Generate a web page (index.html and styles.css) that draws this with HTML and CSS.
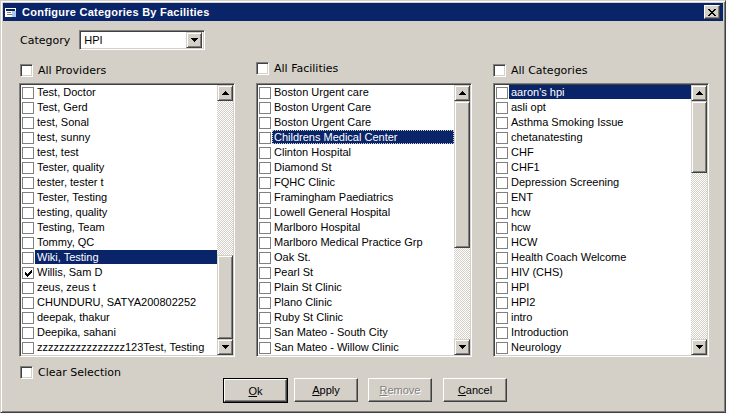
FILE: index.html
```html
<!DOCTYPE html>
<html>
<head>
<meta charset="utf-8">
<title>Configure Categories By Facilities</title>
<link rel="stylesheet" href="styles.css">
</head>
<body>
<div class="window">
  <div class="titlebar">
    <svg class="ticon" width="12" height="11" viewBox="0 0 12 11">
      <rect x="0" y="1" width="11" height="9" fill="#fff"/>
      <rect x="1" y="2" width="9" height="2" fill="#0a246a"/>
      <rect x="2" y="5" width="4" height="1" fill="#808080"/>
      <rect x="2" y="7" width="6" height="1" fill="#808080"/>
      <rect x="7" y="4" width="4" height="6" fill="#a6caf0"/>
    </svg>
    <span class="title">Configure Categories By Facilities</span>
    <div class="close">
      <svg width="8" height="7" viewBox="0 0 8 7"><path d="M0 0h2v1H0zM6 0h2v1H6zM1 1h2v1H1zM5 1h2v1H5zM2 2h4v1H2zM3 3h2v1H3zM2 4h4v1H2zM1 5h2v1H1zM5 5h2v1H5zM0 6h2v1H0zM6 6h2v1H6z" fill="#000"/></svg>
    </div>
  </div>
  <div class="content">
    <div class="catrow">
      <span class="label">Category</span>
      <div class="combo">
        <span class="combo-text">HPI</span>
        <div class="arrowbtn"><svg width="7" height="4" viewBox="0 0 7 4"><path d="M0 0h7v1H0zM1 1h5v1H1zM2 2h3v1H2zM3 3h1v1H3z" fill="#000"/></svg></div>
      </div>
    </div>

    <div class="cols">
      <div class="col">
        <div class="hdr hdr-left"><span class="cb3d"></span><span class="label">All Providers</span></div>
        <div class="list">
          <div class="items">
            <div class="item"><span class="ib"></span><span class="txt">Test, Doctor</span></div>
            <div class="item"><span class="ib"></span><span class="txt">Test, Gerd</span></div>
            <div class="item"><span class="ib"></span><span class="txt">test, Sonal</span></div>
            <div class="item"><span class="ib"></span><span class="txt">test, sunny</span></div>
            <div class="item"><span class="ib"></span><span class="txt">test, test</span></div>
            <div class="item"><span class="ib"></span><span class="txt">Tester, quality</span></div>
            <div class="item"><span class="ib"></span><span class="txt">tester, tester t</span></div>
            <div class="item"><span class="ib"></span><span class="txt">Tester, Testing</span></div>
            <div class="item"><span class="ib"></span><span class="txt">testing, quality</span></div>
            <div class="item"><span class="ib"></span><span class="txt">Testing, Team</span></div>
            <div class="item"><span class="ib"></span><span class="txt">Tommy, QC</span></div>
            <div class="item"><span class="ib"></span><span class="txt sel">Wiki, Testing</span></div>
            <div class="item"><span class="ib"><svg width="7" height="7" viewBox="0 0 7 7"><path d="M6 0h1v1H6zM5 1h2v1H5zM0 2h1v1H0zM4 2h3v1H4zM0 3h2v1H0zM3 3h3v1H3zM0 4h5v1H0zM1 5h3v1H1zM2 6h1v1H2z" fill="#000"/></svg></span><span class="txt">Willis, Sam D</span></div>
            <div class="item"><span class="ib"></span><span class="txt">zeus, zeus t</span></div>
            <div class="item"><span class="ib"></span><span class="txt">CHUNDURU, SATYA200802252</span></div>
            <div class="item"><span class="ib"></span><span class="txt">deepak, thakur</span></div>
            <div class="item"><span class="ib"></span><span class="txt">Deepika, sahani</span></div>
            <div class="item"><span class="ib"></span><span class="txt">zzzzzzzzzzzzzzzz123Test, Testing</span></div>
          </div>
          <div class="sb">
            <div class="arrowbtn sq"><svg width="7" height="4" viewBox="0 0 7 4"><path d="M3 0h1v1H3zM2 1h3v1H2zM1 2h5v1H1zM0 3h7v1H0z" fill="#000"/></svg></div>
            <div class="track track-end"><div class="thumb" style="height:84px"></div></div>
            <div class="arrowbtn sq"><svg width="7" height="4" viewBox="0 0 7 4"><path d="M0 0h7v1H0zM1 1h5v1H1zM2 2h3v1H2zM3 3h1v1H3z" fill="#000"/></svg></div>
          </div>
        </div>
      </div>

      <div class="col">
        <div class="hdr hdr-mid"><span class="cb3d"></span><span class="label">All Facilities</span></div>
        <div class="list">
          <div class="items">
            <div class="item"><span class="ib"></span><span class="txt">Boston Urgent care</span></div>
            <div class="item"><span class="ib"></span><span class="txt">Boston Urgent Care</span></div>
            <div class="item"><span class="ib"></span><span class="txt">Boston Urgent Care</span></div>
            <div class="item"><span class="ib"></span><span class="txt sel focus">Childrens Medical Center</span></div>
            <div class="item"><span class="ib"></span><span class="txt">Clinton Hospital</span></div>
            <div class="item"><span class="ib"></span><span class="txt">Diamond St</span></div>
            <div class="item"><span class="ib"></span><span class="txt">FQHC Clinic</span></div>
            <div class="item"><span class="ib"></span><span class="txt">Framingham Paediatrics</span></div>
            <div class="item"><span class="ib"></span><span class="txt">Lowell General Hospital</span></div>
            <div class="item"><span class="ib"></span><span class="txt">Marlboro Hospital</span></div>
            <div class="item"><span class="ib"></span><span class="txt">Marlboro Medical Practice Grp</span></div>
            <div class="item"><span class="ib"></span><span class="txt">Oak St.</span></div>
            <div class="item"><span class="ib"></span><span class="txt">Pearl St</span></div>
            <div class="item"><span class="ib"></span><span class="txt">Plain St Clinic</span></div>
            <div class="item"><span class="ib"></span><span class="txt">Plano Clinic</span></div>
            <div class="item"><span class="ib"></span><span class="txt">Ruby St Clinic</span></div>
            <div class="item"><span class="ib"></span><span class="txt">San Mateo - South City</span></div>
            <div class="item"><span class="ib"></span><span class="txt">San Mateo - Willow Clinic</span></div>
          </div>
          <div class="sb">
            <div class="arrowbtn sq"><svg width="7" height="4" viewBox="0 0 7 4"><path d="M3 0h1v1H3zM2 1h3v1H2zM1 2h5v1H1zM0 3h7v1H0z" fill="#000"/></svg></div>
            <div class="track"><div class="thumb" style="height:147px"></div></div>
            <div class="arrowbtn sq"><svg width="7" height="4" viewBox="0 0 7 4"><path d="M0 0h7v1H0zM1 1h5v1H1zM2 2h3v1H2zM3 3h1v1H3z" fill="#000"/></svg></div>
          </div>
        </div>
      </div>

      <div class="col">
        <div class="hdr hdr-right"><span class="cb3d"></span><span class="label">All Categories</span></div>
        <div class="list">
          <div class="items">
            <div class="item"><span class="ib"></span><span class="txt sel">aaron's hpi</span></div>
            <div class="item"><span class="ib"></span><span class="txt">asli opt</span></div>
            <div class="item"><span class="ib"></span><span class="txt">Asthma Smoking Issue</span></div>
            <div class="item"><span class="ib"></span><span class="txt">chetanatesting</span></div>
            <div class="item"><span class="ib"></span><span class="txt">CHF</span></div>
            <div class="item"><span class="ib"></span><span class="txt">CHF1</span></div>
            <div class="item"><span class="ib"></span><span class="txt">Depression Screening</span></div>
            <div class="item"><span class="ib"></span><span class="txt">ENT</span></div>
            <div class="item"><span class="ib"></span><span class="txt">hcw</span></div>
            <div class="item"><span class="ib"></span><span class="txt">hcw</span></div>
            <div class="item"><span class="ib"></span><span class="txt">HCW</span></div>
            <div class="item"><span class="ib"></span><span class="txt">Health Coach Welcome</span></div>
            <div class="item"><span class="ib"></span><span class="txt">HIV (CHS)</span></div>
            <div class="item"><span class="ib"></span><span class="txt">HPI</span></div>
            <div class="item"><span class="ib"></span><span class="txt">HPI2</span></div>
            <div class="item"><span class="ib"></span><span class="txt">intro</span></div>
            <div class="item"><span class="ib"></span><span class="txt">Introduction</span></div>
            <div class="item"><span class="ib"></span><span class="txt">Neurology</span></div>
          </div>
          <div class="sb">
            <div class="arrowbtn sq"><svg width="7" height="4" viewBox="0 0 7 4"><path d="M3 0h1v1H3zM2 1h3v1H2zM1 2h5v1H1zM0 3h7v1H0z" fill="#000"/></svg></div>
            <div class="track"><div class="thumb" style="height:72px"></div></div>
            <div class="arrowbtn sq"><svg width="7" height="4" viewBox="0 0 7 4"><path d="M0 0h7v1H0zM1 1h5v1H1zM2 2h3v1H2zM3 3h1v1H3z" fill="#000"/></svg></div>
          </div>
        </div>
      </div>
    </div>

    <div class="bottom">
      <div class="clear"><span class="cb3d"></span><span class="label">Clear Selection</span></div>
      <div class="buttons">
        <div class="btn btn-default"><span class="btn-in"><u>O</u>k</span></div>
        <div class="btn btn-apply"><u>A</u>pply</div>
        <div class="btn btn-remove disabled"><u>R</u>emove</div>
        <div class="btn btn-cancel"><u>C</u>ancel</div>
      </div>
    </div>
  </div>
</div>
</body>
</html>
```

FILE: styles.css
```css
* { box-sizing: border-box; }

body {
  margin: 0;
  background: #fbfbfb;
  font-family: "Liberation Sans", Arial, sans-serif;
  font-size: 11px;
  color: #000;
}

.window {
  width: 726px;
  height: 413px;
  background: #d4d0c8;
  border: 1px solid;
  border-color: #d4d0c8 #404040 #404040 #d4d0c8;
  box-shadow: inset 1px 1px #fff, inset -1px -1px #808080;
  padding: 2px;
  display: flex;
  flex-direction: column;
}

.titlebar {
  height: 18px;
  background: #0a246a;
  display: flex;
  align-items: center;
  padding-left: 2px;
  color: #fff;
}
.ticon { margin-right: 5px; flex: none; }
.title {
  font-family: "Liberation Sans", Arial, sans-serif;
  font-weight: bold;
  font-size: 11px;
  letter-spacing: 0.25px;
  white-space: nowrap;
}
.close {
  margin-left: auto;
  margin-right: 3px;
  width: 16px;
  height: 14px;
  background: #d4d0c8;
  border: 1px solid;
  border-color: #fff #404040 #404040 #fff;
  box-shadow: inset -1px -1px #808080;
  display: flex;
  align-items: center;
  justify-content: center;
  padding-right: 1px;
}

.content {
  padding-left: 16px;
  display: flex;
  flex-direction: column;
}

.label {
  font-family: "DejaVu Sans", Verdana, sans-serif;
  font-size: 11px;
  white-space: nowrap;
}

.catrow {
  margin-top: 9px;
  height: 20px;
  display: flex;
  align-items: center;
}
.catrow .label { margin-left: 1px; }

.combo {
  margin-left: 9px;
  width: 126px;
  height: 20px;
  background: #fff;
  border: 1px solid;
  border-color: #808080 #fff #fff #808080;
  box-shadow: inset 1px 1px #404040, inset -1px -1px #d4d0c8;
  padding: 2px;
  display: flex;
  align-items: center;
}
.combo-text { flex: 1; padding-left: 2px; }

.arrowbtn {
  width: 16px;
  height: 16px;
  background: #d4d0c8;
  border: 1px solid;
  border-color: #d4d0c8 #404040 #404040 #d4d0c8;
  box-shadow: inset 1px 1px #fff, inset -1px -1px #808080;
  display: flex;
  align-items: center;
  justify-content: center;
  flex: none;
}
.arrowbtn svg { display: block; }

.cols {
  margin-top: 10px;
  display: flex;
  gap: 21px;
}
.col {
  width: 216px;
  display: flex;
  flex-direction: column;
}
.hdr {
  height: 23px;
  display: flex;
  align-items: flex-start;
}
.hdr .cb3d { margin-top: 4px; }
.hdr .label { margin-left: 5px; margin-top: 4px; line-height: 13px; }
.hdr-left { padding-left: 1px; }
.hdr-mid .cb3d, .hdr-mid .label { margin-top: 2px; }

.cb3d {
  width: 13px;
  height: 13px;
  flex: none;
  background: #fff;
  border: 1px solid;
  border-color: #808080 #fff #fff #808080;
  box-shadow: inset 1px 1px #404040, inset -1px -1px #d4d0c8;
}

.list {
  height: 274px;
  background: #fff;
  border: 1px solid;
  border-color: #808080 #fff #fff #808080;
  box-shadow: inset 1px 1px #404040, inset -1px -1px #d4d0c8;
  padding: 1px;
  display: flex;
}
.items {
  flex: 1;
  overflow: hidden;
  display: flex;
  flex-direction: column;
}
.item {
  height: 15px;
  display: flex;
  align-items: flex-start;
  flex: none;
}
.ib {
  width: 12px;
  height: 12px;
  margin: 2px 0 0 1px;
  border: 1px solid #808080;
  background: #fff;
  flex: none;
  display: flex;
  align-items: center;
  justify-content: center;
}
.ib svg { display: block; }
.txt {
  flex: 1;
  margin-left: 1px;
  padding: 0 2px;
  height: 14px;
  line-height: 14px;
  white-space: nowrap;
  overflow: hidden;
}
.sel { background: #0a246a; color: #fff; }
.focus { outline: 1px dotted #d4d0c8; outline-offset: -1px; }

.sb {
  width: 16px;
  display: flex;
  flex-direction: column;
  flex: none;
}
.track {
  flex: 1;
  background-color: #fff;
  background-image: repeating-conic-gradient(#d4d0c8 0 25%, #fff 0 50%);
  background-size: 2px 2px;
  display: flex;
  flex-direction: column;
}
.track-end { justify-content: flex-end; }
.thumb {
  background: #d4d0c8;
  border: 1px solid;
  border-color: #d4d0c8 #404040 #404040 #d4d0c8;
  box-shadow: inset 1px 1px #fff, inset -1px -1px #808080;
  flex: none;
}

.bottom {
  display: flex;
  align-items: flex-start;
  margin-top: 9px;
}
.clear {
  width: 204px;
  padding-left: 1px;
  display: flex;
  align-items: center;
}
.clear .label { margin-left: 5px; }

.buttons {
  margin-top: 12px;
  display: flex;
  align-items: flex-start;
}
.btn {
  width: 64px;
  height: 24px;
  background: #d4d0c8;
  border: 1px solid;
  border-color: #fff #404040 #404040 #fff;
  box-shadow: inset -1px -1px #808080;
  display: flex;
  align-items: center;
  justify-content: center;
  font-family: "Liberation Sans", Arial, sans-serif;
  font-size: 11px;
}
.btn u { text-underline-offset: 1px; }
.btn-default {
  width: 65px;
  height: 25px;
  border: 1px solid #000;
  box-shadow: none;
  padding: 0;
}
.btn-in {
  width: 100%;
  height: 100%;
  border: 1px solid;
  border-color: #fff #404040 #404040 #fff;
  box-shadow: inset -1px -1px #808080;
  display: flex;
  align-items: center;
  justify-content: center;
}
.btn-apply { margin-left: 6px; }
.btn-remove { margin-left: 10px; }
.btn-cancel { margin-left: 11px; }
.disabled { color: #808080; text-shadow: 1px 1px #fff; }
```
